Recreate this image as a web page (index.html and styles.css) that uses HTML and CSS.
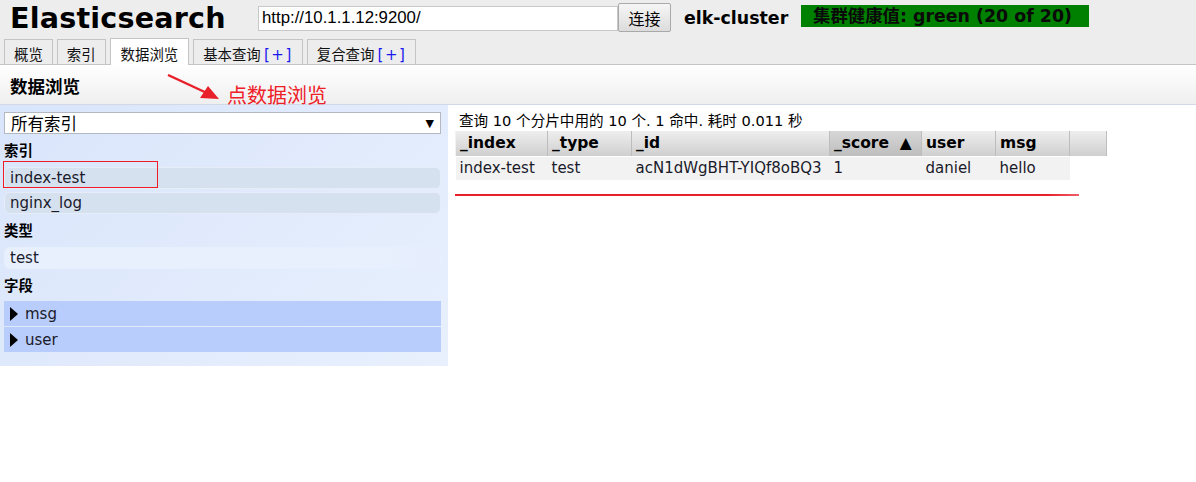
FILE: index.html
```html
<!DOCTYPE html>
<html>
<head>
<meta charset="utf-8">
<link rel="stylesheet" href="styles.css">
</head>
<body>
<div class="header">
  <div class="topline">
    <h1 class="title">Elasticsearch</h1>
    <input class="url" type="text" value="http://10.1.1.12:9200/">
    <button class="connect">连接</button>
    <span class="cluster">elk-cluster</span>
    <span class="health">集群健康值: green (20 of 20)</span>
  </div>
  <div class="tabs">
    <div class="tab">概览</div>
    <div class="tab">索引</div>
    <div class="tab active">数据浏览</div>
    <div class="tab">基本查询 <span class="plus">[+]</span></div>
    <div class="tab">复合查询 <span class="plus">[+]</span></div>
  </div>
</div>
<div class="subbar">
  <span class="subtitle">数据浏览</span>
  <svg class="arrow" width="54" height="28" viewBox="0 0 54 28">
    <line x1="1" y1="1" x2="42" y2="20" stroke="#e8202a" stroke-width="2.4"/>
    <polygon points="52,25 33,24 41,12" fill="#e8202a"/>
  </svg>
  <span class="note">点数据浏览</span>
</div>
<div class="main">
  <div class="sidebar">
    <div class="select"><span>所有索引</span><span class="caret">▼</span></div>
    <div class="sec">索引</div>
    <div class="item">index-test</div>
    <div class="item">nginx_log</div>
    <div class="sec">类型</div>
    <div class="item light">test</div>
    <div class="sec last">字段</div>
    <div class="field"><span class="tri"></span>msg</div>
    <div class="field"><span class="tri"></span>user</div>
    <div class="redbox"></div>
  </div>
  <div class="results">
    <div class="status">查询 10 个分片中用的 10 个. 1 命中. 耗时 0.011 秒</div>
    <table class="grid">
      <thead>
        <tr>
          <th class="c1">_index</th>
          <th class="c2">_type</th>
          <th class="c3">_id</th>
          <th class="c4 sorted">_score&nbsp;&nbsp;▲</th>
          <th class="c5">user</th>
          <th class="c6">msg</th>
          <th class="c7"></th>
        </tr>
      </thead>
      <tbody>
        <tr>
          <td>index-test</td>
          <td>test</td>
          <td>acN1dWgBHT-YIQf8oBQ3</td>
          <td>1</td>
          <td>daniel</td>
          <td class="last">hello</td>
          <td class="empty"></td>
        </tr>
      </tbody>
    </table>
    <div class="redline"></div>
  </div>
</div>
</body>
</html>
```

FILE: styles.css
```css
html, body {
  margin: 0;
  padding: 0;
  background: #ffffff;
  font-family: "DejaVu Sans", "Noto Sans CJK SC", sans-serif;
  color: #000;
}

.header {
  background: #ededed;
  border-bottom: 1px solid #c4c4c4;
}

.topline {
  display: flex;
  align-items: center;
  height: 35px;
}

.title {
  margin: 0 0 0 10px;
  font-size: 28.6px;
  font-weight: bold;
  line-height: 34px;
  width: 248px;
  letter-spacing: 0.2px;
}

.url {
  box-sizing: border-box;
  width: 360px;
  height: 25px;
  margin: 1px 0 0 0;
  border: 1px solid #c8c8c8;
  padding: 0 3px;
  font-family: "Liberation Sans", sans-serif;
  font-size: 16.8px;
  color: #000;
  background: #fff;
}

.connect {
  box-sizing: border-box;
  width: 53px;
  height: 29px;
  margin: 0;
  border: 1px solid #a9a9a9;
  border-radius: 2px;
  background: linear-gradient(#f6f6f6, #dcdcdc);
  font-family: "Noto Sans CJK SC", sans-serif;
  font-size: 16px;
  padding: 0;
  color: #000;
}

.cluster {
  margin-left: 13px;
  font-weight: bold;
  font-size: 17.4px;
  width: 117px;
}

.health {
  background: #008000;
  height: 22px;
  line-height: 22px;
  padding: 0 12px;
  font-weight: bold;
  font-size: 17.4px;
  width: 264px;
  margin-top: -3px;
  color: #0a0a0a;
  white-space: nowrap;
}

.tabs {
  display: flex;
  gap: 4px;
  padding: 4px 0 0 4px;
  height: 25px;
}

.tab {
  box-sizing: border-box;
  height: 25px;
  padding: 0 9px;
  border: 1px solid #c4c4c4;
  border-bottom: none;
  font-family: "Noto Sans CJK SC", sans-serif;
  font-size: 14.4px;
  line-height: 27px;
  color: #111;
  white-space: nowrap;
  flex: none;
}

.tab.active {
  background: #fff;
  height: 27px;
  margin-top: -1px;
  line-height: 29px;
  position: relative;
  z-index: 1;
  padding: 0 10px;
}

.plus {
  color: #1a1aee;
  font-family: "DejaVu Sans", sans-serif;
  font-size: 15px;
  letter-spacing: 1.5px;
}

.subbar {
  position: relative;
  height: 39px;
  background: linear-gradient(#ffffff, #efefef);
  border-bottom: 1px solid #d2d8e6;
  display: flex;
  align-items: center;
}

.subtitle {
  margin-left: 10px;
  font-family: "Noto Sans CJK SC", sans-serif;
  font-weight: bold;
  font-size: 17.5px;
  margin-top: 1px;
}

.arrow {
  position: absolute;
  left: 167px;
  top: 9px;
}

.note {
  position: absolute;
  left: 227px;
  top: 17px;
  font-family: "Noto Sans CJK SC", sans-serif;
  font-size: 20px;
  line-height: 26px;
  color: #ee2028;
}

.main {
  display: flex;
  align-items: flex-start;
}

.sidebar {
  position: relative;
  box-sizing: border-box;
  width: 448px;
  padding: 7px 7px 13px 4px;
  background: linear-gradient(135deg, #d9e5fb, #e8f0fd);
}

.select {
  box-sizing: border-box;
  height: 22px;
  border: 1px solid #b4b8c0;
  background: #fff;
  display: flex;
  justify-content: space-between;
  align-items: center;
  padding: 0 6px 0 6px;
  font-family: "Noto Sans CJK SC", sans-serif;
  font-size: 16.5px;
}

.caret {
  font-size: 11px;
  font-family: "DejaVu Sans", sans-serif;
}

.sec {
  padding: 6px 0 7px 0;
  line-height: 20px;
  font-family: "Noto Sans CJK SC", sans-serif;
  font-weight: bold;
  font-size: 14.4px;
}

.item {
  box-sizing: border-box;
  height: 22px;
  margin-bottom: 3px;
  border: 1px solid #e6edf9;
  border-radius: 6px;
  background: #d6e1ef;
  padding-left: 5px;
  font-size: 15px;
  line-height: 20px;
  color: #1a1a2a;
}

.item.light {
  border-color: #e7effd;
  border-right-color: transparent;
  background: linear-gradient(90deg, #e8f0fe 85%, #e6eefd);
  margin-bottom: 0;
}

.item + .sec {
  padding-top: 3px;
}

.sec.last {
  padding-top: 6px;
  padding-bottom: 6px;
}

.field {
  display: flex;
  align-items: center;
  height: 25px;
  background: #b8cdfb;
  margin-bottom: 1px;
  font-size: 15px;
  padding-left: 6px;
  color: #1a1a2a;
}

.tri {
  width: 0;
  height: 0;
  border-left: 8px solid #000;
  border-top: 7px solid transparent;
  border-bottom: 7px solid transparent;
  margin-right: 7px;
}

.redbox {
  position: absolute;
  z-index: 2;
  left: 3px;
  top: 56px;
  width: 153px;
  height: 25px;
  border: 1px solid #ee1c25;
}

.results {
  position: relative;
  padding: 6px 0 0 7px;
}

.status {
  font-size: 14.6px;
  line-height: 20px;
  padding-left: 4px;
  font-family: "DejaVu Sans", "Noto Sans CJK SC", sans-serif;
}

.grid {
  border-collapse: collapse;
  margin-top: 0;
}

.grid th {
  box-sizing: border-box;
  height: 25px;
  text-align: left;
  padding: 0 4px;
  font-size: 15.5px;
  font-weight: bold;
  background: linear-gradient(#eeeeee, #cfcfcf);
  border-left: 1px solid #f2f2f2;
  border-right: 1px solid #bdbdbd;
  border-bottom: 1px solid #fff;
  white-space: nowrap;
}

.grid th.sorted {
  background: linear-gradient(#d6d6d6, #bdbdbd);
}

.c1 { width: 92px; }
.c2 { width: 84px; }
.c3 { width: 198px; }
.c4 { width: 92px; }
.c5 { width: 74px; }
.c6 { width: 74px; }
.c7 { width: 37px; }

.grid td {
  height: 23px;
  padding: 0 4px;
  font-size: 15px;
  background: #f2f2f2;
  color: #1a1a2a;
  white-space: nowrap;
}

.grid td.empty {
  background: transparent;
}

.redline {
  position: absolute;
  left: 7px;
  top: 89px;
  width: 624px;
  height: 2px;
  background: linear-gradient(90deg, #e8202a 95%, #f06068);
}
```
